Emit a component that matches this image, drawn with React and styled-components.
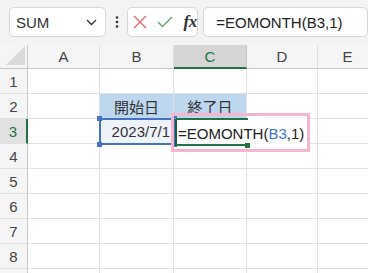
import styled, { createGlobalStyle } from "styled-components";

const Global = createGlobalStyle`
  html, body { margin: 0; padding: 0; background: #fff; }
  body { font-family: "Liberation Sans", "Noto Sans CJK JP", sans-serif; }
`;

const COLS = ["A", "B", "C", "D", "E"];
const ROWS = [1, 2, 3, 4, 5, 6, 7, 8, 9];

const Page = styled.div`
  width: 368px;
  height: 273px;
  overflow: hidden;
  background: #fff;
`;

const Toolbar = styled.div`
  height: 45px;
  box-sizing: border-box;
  padding: 7px 0 0 9px;
  display: flex;
  align-items: flex-start;
  background: #f3f3f3;
`;

const Box = styled.div`
  height: 30px;
  box-sizing: border-box;
  background: #fff;
  border: 1px solid #d8d8d8;
  border-radius: 5px;
  display: flex;
  align-items: center;
`;

const NameBox = styled(Box)`
  width: 100px;
  padding: 0 8px 0 6px;
  justify-content: space-between;
  font-size: 15px;
  color: #333;
`;

const Dots = styled.div`
  width: 22px;
  height: 30px;
  display: flex;
  align-items: center;
  justify-content: center;
`;

const FxBox = styled(Box)`
  width: 73px;
  padding-left: 5px;
  gap: 10px;
`;

const Fx = styled.span`
  font-family: "Liberation Serif", "DejaVu Serif", serif;
  font-style: italic;
  font-weight: bold;
  font-size: 17px;
  color: #333;
  letter-spacing: -0.3px;
`;

const FormulaInput = styled(Box)`
  width: 170px;
  margin-left: 5px;
  padding-left: 12px;
  font-size: 15px;
  color: #222;
`;

const Sheet = styled.div`
  position: relative;
  display: grid;
  grid-template-columns: 28px 72px 74px 73px 71px 60px;
  grid-template-rows: 24px repeat(9, 25px);
`;

const Corner = styled.div`
  background: #f5f5f5;
  border-right: 1px solid #c8c8c8;
  border-bottom: 1px solid #c8c8c8;
  display: flex;
  align-items: flex-end;
  justify-content: flex-end;
  padding: 0 2px 3px 0;
`;

const ColHead = styled.div`
  background: ${(p) => (p.$active ? "#d6d6d6" : "#f5f5f5")};
  color: ${(p) => (p.$active ? "#217346" : "#444")};
  border-right: 1px solid ${(p) => (p.$active ? "#c8c8c8" : "#e0e0e0")};
  border-bottom: ${(p) => (p.$active ? "2px solid #217346" : "1px solid #c8c8c8")};
  display: flex;
  align-items: center;
  justify-content: center;
  font-size: 15px;
`;

const RowHead = styled.div`
  background: ${(p) => (p.$active ? "#e1e1e1" : "#f5f5f5")};
  color: ${(p) => (p.$active ? "#217346" : "#444")};
  border-right: ${(p) => (p.$active ? "2px solid #217346" : "1px solid #c8c8c8")};
  border-bottom: 1px solid #e0e0e0;
  display: flex;
  align-items: center;
  justify-content: center;
  font-size: 15px;
`;

const Cell = styled.div`
  background: ${(p) => p.$fill || "#fff"};
  border-right: 1px solid #e1e1e1;
  border-bottom: 1px solid #e1e1e1;
  display: flex;
  align-items: center;
  justify-content: ${(p) => p.$align || "flex-start"};
  padding: 0 3px;
  font-size: 15px;
  color: #333;
  white-space: nowrap;
`;

const RefFrame = styled.div`
  position: absolute;
  left: 99px;
  top: 73px;
  width: 76px;
  height: 27px;
  box-sizing: border-box;
  border: 2px solid #4472c4;
`;

const Handle = styled.span`
  position: absolute;
  width: 5px;
  height: 5px;
  background: ${(p) => p.$color};
  left: ${(p) => p.$x}px;
  top: ${(p) => p.$y}px;
`;

const EditBox = styled.div`
  position: absolute;
  left: 175px;
  top: 73px;
  width: 133px;
  height: 28px;
  box-sizing: border-box;
  background: #fff;
  border-top: 2px solid transparent;
  border-left: 2px solid #1f5c38;
  display: flex;
  align-items: center;
  padding-left: 1px;
  font-size: 15px;
  color: #222;
  white-space: nowrap;
`;

const GreenLine = styled.div`
  position: absolute;
  left: 176px;
  top: ${(p) => p.$y}px;
  width: ${(p) => p.$w}px;
  height: 2px;
  background: #217346;
`;

const Ref = styled.span`
  color: #4472c4;
`;

const Highlight = styled.div`
  position: absolute;
  left: 171px;
  top: 68px;
  width: 139px;
  height: 39px;
  box-sizing: border-box;
  border: 3px solid #f4b6ce;
`;

const Chevron = () => (
  <svg width="11" height="7" viewBox="0 0 11 7">
    <path d="M1 1 L5.5 5.5 L10 1" fill="none" stroke="#333" strokeWidth="1.3" />
  </svg>
);

const VDots = () => (
  <svg width="4" height="12" viewBox="0 0 4 12">
    <circle cx="2" cy="1.5" r="1.3" fill="#333" />
    <circle cx="2" cy="6" r="1.3" fill="#333" />
    <circle cx="2" cy="10.5" r="1.3" fill="#333" />
  </svg>
);

const Cross = () => (
  <svg width="14" height="14" viewBox="0 0 14 14">
    <path d="M1 1 L13 13 M13 1 L1 13" stroke="#e06b6b" strokeWidth="1.4" fill="none" />
  </svg>
);

const Check = () => (
  <svg width="16" height="12" viewBox="0 0 16 12">
    <path d="M1 6 L5.5 10.5 L15 1" stroke="#5da66f" strokeWidth="1.4" fill="none" />
  </svg>
);

const Triangle = () => (
  <svg width="19" height="19" viewBox="0 0 19 19">
    <path d="M19 0 L19 19 L0 19 Z" fill="#d9d9d9" />
  </svg>
);

const cellContent = (r, c) => {
  if (r === 2 && c === "B") return { text: "開始日", fill: "#bdd7ee", align: "center" };
  if (r === 2 && c === "C") return { text: "終了日", fill: "#bdd7ee", align: "center" };
  if (r === 3 && c === "B") return { text: "2023/7/1", fill: "#eef3fa", align: "flex-end" };
  return { text: "" };
};

export default function App() {
  return (
    <Page>
      <Global />
      <Toolbar>
        <NameBox>
          <span>SUM</span>
          <Chevron />
        </NameBox>
        <Dots>
          <VDots />
        </Dots>
        <FxBox>
          <Cross />
          <Check />
          <Fx>fx</Fx>
        </FxBox>
        <FormulaInput>=EOMONTH(B3,1)</FormulaInput>
      </Toolbar>
      <Sheet>
        <Corner>
          <Triangle />
        </Corner>
        {COLS.map((c) => (
          <ColHead key={c} $active={c === "C"}>
            {c}
          </ColHead>
        ))}
        {ROWS.map((r) => [
          <RowHead key={"h" + r} $active={r === 3}>
            {r < 9 ? r : ""}
          </RowHead>,
          ...COLS.map((c) => {
            const d = cellContent(r, c);
            return (
              <Cell key={c + r} $fill={d.fill} $align={d.align}>
                {d.text}
              </Cell>
            );
          }),
        ])}
        <RefFrame />
        <Handle $color="#4472c4" $x={97} $y={71} />
        <Handle $color="#4472c4" $x={97} $y={97} />
        <Handle $color="#4472c4" $x={172} $y={71} />
        <Handle $color="#4472c4" $x={172} $y={97} />
        <EditBox>
          =EOMONTH(<Ref>B3</Ref>,1)
        </EditBox>
        <GreenLine $y={73} $w={72} />
        <GreenLine $y={99} $w={70} />
        <Handle $color="#217346" $x={245} $y={98} />
        <Highlight />
      </Sheet>
    </Page>
  );
}
